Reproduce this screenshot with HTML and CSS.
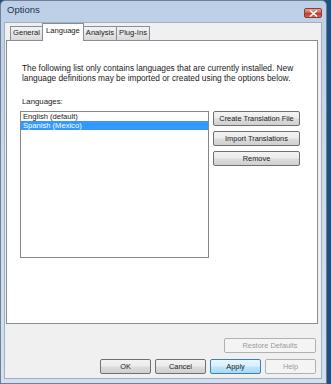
FILE: index.html
```html
<!DOCTYPE html>
<html lang="en">
<head>
    <meta charset="UTF-8">
    <title>Options</title>
    <link rel="stylesheet" href="styles.css">
</head>
<body>
    <div class="window">
        <div class="titlebar">
            <span class="title">Options</span>
            <button class="close" aria-label="Close">
                <svg width="9" height="7" viewBox="0 0 9 7">
                    <path d="M1 0.5 L8 6.5 M8 0.5 L1 6.5" stroke="#fff" stroke-width="1.6" fill="none"/>
                </svg>
            </button>
        </div>

        <div class="client">
            <div class="tabs">
                <div class="tab">General</div>
                <div class="tab active">Language</div>
                <div class="tab">Analysis</div>
                <div class="tab">Plug-Ins</div>
            </div>

            <div class="panel">
                <p class="intro">
                    The following list only contains languages that are currently installed. New<br>
                    language definitions may be imported or created using the options below.
                </p>
                <div class="label">Languages:</div>
                <div class="lang-row">
                    <ul class="listbox">
                        <li>English (default)</li>
                        <li class="selected">Spanish (Mexico)</li>
                    </ul>
                    <div class="side-buttons">
                        <button class="btn">Create Translation File</button>
                        <button class="btn">Import Translations</button>
                        <button class="btn">Remove</button>
                    </div>
                </div>
            </div>

            <div class="restore-row">
                <button class="btn restore" disabled>Restore Defaults</button>
            </div>

            <div class="dialog-buttons">
                <button class="btn dlg">OK</button>
                <button class="btn dlg">Cancel</button>
                <button class="btn dlg focused">Apply</button>
                <button class="btn dlg" disabled>Help</button>
            </div>
        </div>
    </div>
</body>
</html>
```

FILE: styles.css
```css
* {
    margin: 0;
    padding: 0;
    box-sizing: border-box;
}

body {
    width: 331px;
    height: 384px;
    overflow: hidden;
    background: #1f4f7e;
    font-family: 'Liberation Sans', Arial, sans-serif;
    font-size: 8.3px;
    color: #1a1a1a;
}

.window {
    width: 327px;
    height: 384px;
    display: flex;
    flex-direction: column;
    padding: 0 4px 4px 3px;
    border: 1px solid #6f8098;
    border-radius: 5px 5px 0 0;
    background: linear-gradient(180deg, #bccfe6 0%, #cbdaec 40%, #d3e0ef 100%);
}

/* title bar */
.titlebar {
    height: 21px;
    display: flex;
    align-items: flex-start;
    padding: 4px 0 0 3px;
}

.title {
    font-size: 9.5px;
    color: #1c3450;
    line-height: 10px;
}

.close {
    margin-left: auto;
    margin-top: 3px;
    width: 18px;
    height: 10px;
    display: flex;
    align-items: center;
    justify-content: center;
    border: 1px solid #8c3b33;
    border-radius: 2px;
    background: linear-gradient(180deg, #e8a296 0%, #d7604f 45%, #c1392a 55%, #d5644e 100%);
}

/* client area */
.client {
    flex: 1;
    display: flex;
    flex-direction: column;
    padding: 1px 3px 0 1px;
    background: #f0f0f0;
    border: 1px solid #9fb0c4;
}

.tabs {
    height: 16px;
    display: flex;
    align-items: flex-end;
    padding-left: 4px;
}

.tab {
    height: 14px;
    padding: 0 2px;
    font-size: 7.6px;
    line-height: 12px;
    white-space: nowrap;
    border: 1px solid #898c95;
    border-bottom: none;
    background: linear-gradient(180deg, #f3f3f3 0%, #e6e6e6 50%, #d9d9d9 100%);
    margin-right: -1px;
}

.tab.active {
    height: 18px;
    margin-bottom: -1px;
    padding: 0 3px;
    line-height: 13px;
    background: #fff;
    position: relative;
    z-index: 1;
}

.panel {
    height: 284px;
    padding: 22px 0 0 13px;
    background: #fff;
    border: 1px solid #898c95;
}

.intro {
    padding-left: 2px;
    line-height: 10px;
}

.label {
    margin-top: 14px;
    padding-left: 2px;
    line-height: 10px;
    font-size: 7.8px;
}

.lang-row {
    display: flex;
    margin-top: 4px;
}

.listbox {
    list-style: none;
    width: 189px;
    height: 147px;
    border: 1px solid #828790;
}

.listbox li {
    height: 9px;
    line-height: 9px;
    padding-left: 2px;
    font-size: 7.6px;
}

.listbox li.selected {
    background: #3399ff;
    color: #fff;
}

.side-buttons {
    display: flex;
    flex-direction: column;
    gap: 5px;
    margin-left: 4px;
}

/* buttons */
.btn {
    height: 15px;
    padding: 0;
    white-space: nowrap;
    font-family: inherit;
    font-size: 7.4px;
    color: #1a1a1a;
    border: 1px solid #707070;
    border-radius: 2px;
    background: linear-gradient(180deg, #f3f3f3 0%, #ebebeb 48%, #dddddd 52%, #cfcfcf 100%);
}

.side-buttons .btn {
    width: 87px;
}

.btn:disabled {
    color: #9a9a9a;
    border-color: #adb2b5;
    background: #f4f4f4;
}

.restore-row {
    display: flex;
    justify-content: flex-end;
    margin: 14px 2px 0 0;
}

.restore {
    width: 92px;
}

.dialog-buttons {
    display: flex;
    justify-content: flex-end;
    gap: 4px;
    margin: 6px 2px 0 0;
}

.dlg {
    width: 51px;
}

.dlg.focused {
    border-color: #3c7fb1;
    background: linear-gradient(180deg, #eaf6fd 0%, #d9f0fc 48%, #bee6fd 52%, #a7d9f5 100%);
}
```
